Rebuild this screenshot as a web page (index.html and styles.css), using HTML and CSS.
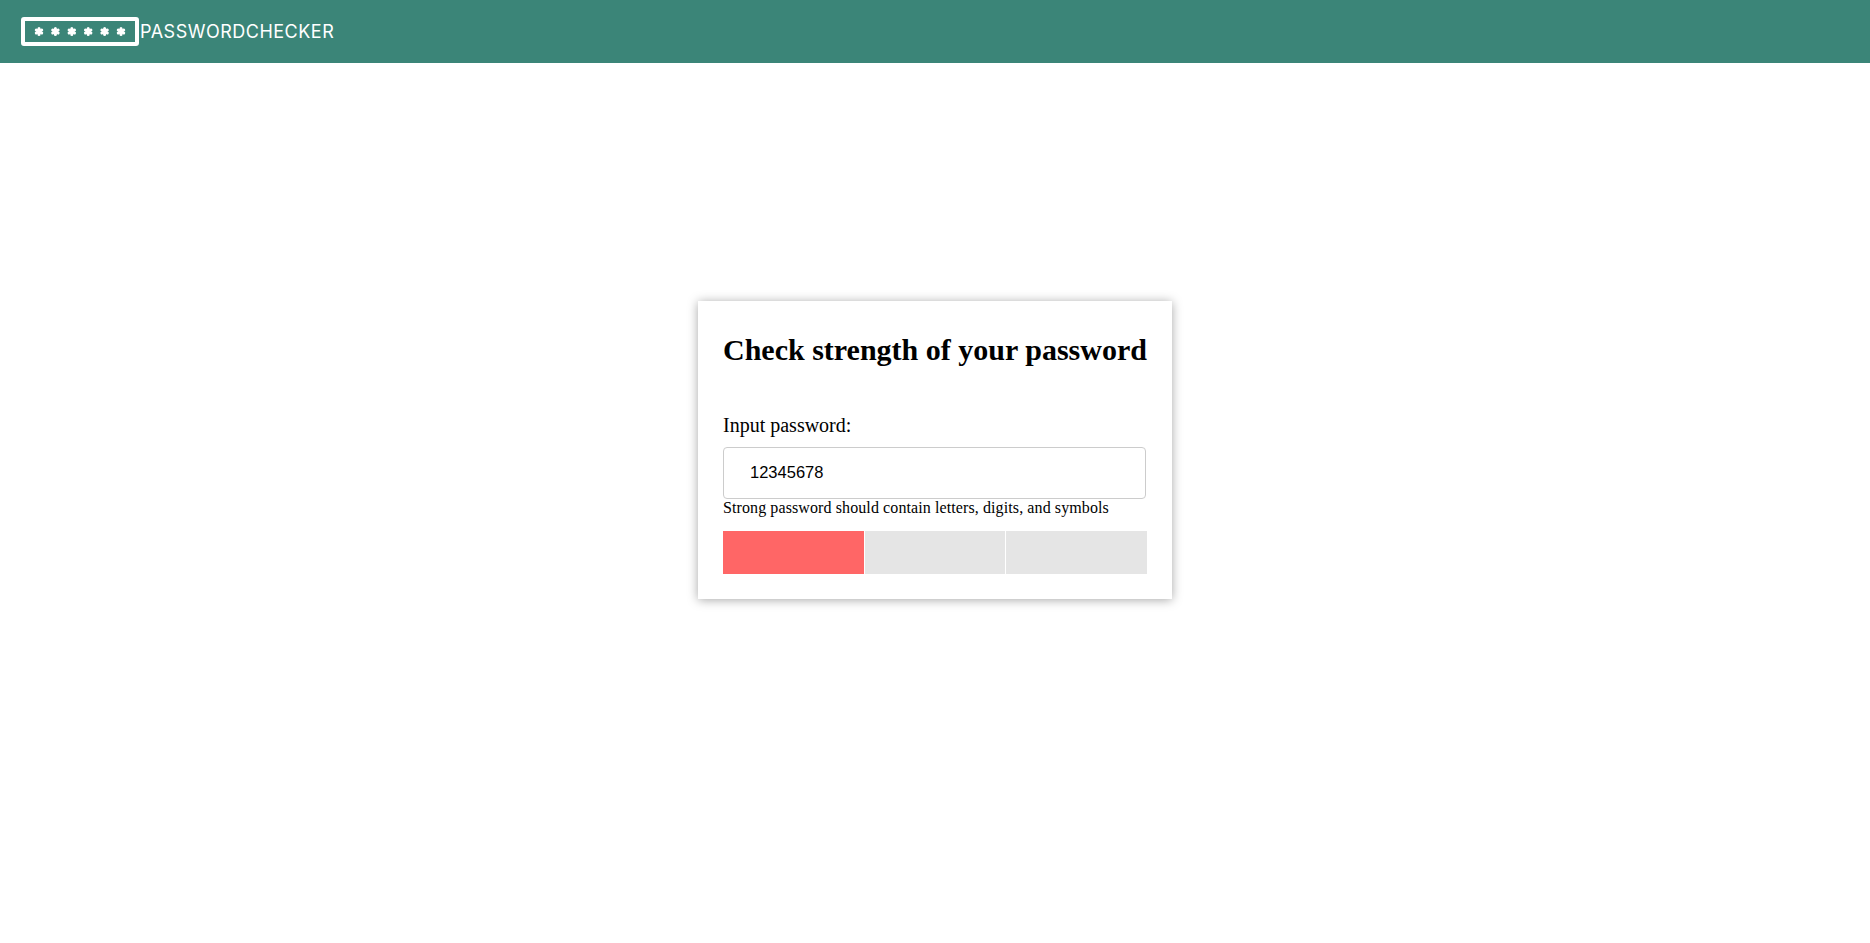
FILE: index.html
```html
<!DOCTYPE html>
<html lang="en">

<head>
    <meta charset="UTF-8">
    <meta name="viewport" content="width=device-width, initial-scale=1.0">
    <title>Password Checker</title>
    <link rel="stylesheet" href="styles.css">
</head>

<body>
    <header class="topbar">
        <a class="logo" href="#">
            <svg class="logo-icon" width="118" height="29" viewBox="0 0 118 29">
                <defs>
                    <g id="star" stroke="#fff" stroke-width="3" stroke-linecap="round">
                        <path d="M0 -3V3" />
                        <path d="M-2.7 -1.5L2.7 1.5" />
                        <path d="M-2.7 1.5L2.7 -1.5" />
                    </g>
                </defs>
                <rect x="2" y="2" width="114" height="25" rx="1" fill="none" stroke="#fff" stroke-width="4" />
                <use href="#star" x="18" y="14.5" />
                <use href="#star" x="34.4" y="14.5" />
                <use href="#star" x="50.8" y="14.5" />
                <use href="#star" x="67.2" y="14.5" />
                <use href="#star" x="83.6" y="14.5" />
                <use href="#star" x="100" y="14.5" />
            </svg>
            <span class="logo-text">PASSWORDCHECKER</span>
        </a>
    </header>

    <main class="card">
        <h1 class="title">Check strength of your password</h1>
        <label class="field-label" for="password">Input password:</label>
        <input class="field-input" id="password" type="text" value="12345678">
        <p class="hint">Strong password should contain letters, digits, and symbols</p>
        <div class="meter">
            <div class="meter-bar meter-bar-weak"></div>
            <div class="meter-bar"></div>
            <div class="meter-bar"></div>
        </div>
    </main>
</body>

</html>
```

FILE: styles.css
```css
* {
    margin: 0;
    padding: 0;
    box-sizing: border-box;
}

html,
body {
    height: 100%;
}

body {
    font-family: "Liberation Serif", serif;
    color: #000;
    background-color: #fff;
}

/* top bar */
.topbar {
    height: 63px;
    padding-left: 21px;
    display: flex;
    align-items: center;
    background-color: #3b8578;
}

.logo {
    display: flex;
    align-items: center;
    gap: 1px;
    color: #fff;
    text-decoration: none;
}

.logo-text {
    font-family: "Inter", sans-serif;
    font-size: 18px;
    font-weight: 400;
    letter-spacing: 0.5px;
}

/* card */
.card {
    width: 474px;
    height: 298px;
    margin: 238px auto 0;
    padding: 32px 25px 0;
    background-color: #fff;
    box-shadow: 0 1px 10px rgba(0, 0, 0, 0.35);
}

.title {
    font-size: 30px;
    line-height: 33px;
    white-space: nowrap;
    margin-bottom: 48px;
}

.field-label {
    display: block;
    font-size: 20px;
    line-height: 23px;
    margin-bottom: 10px;
}

.field-input {
    display: block;
    width: 423px;
    height: 52px;
    padding: 0 26px 2px;
    border: 1px solid #ccc;
    border-radius: 4px;
    outline: none;
    font-family: "Liberation Sans", sans-serif;
    font-size: 16.5px;
    color: #000;
}

.hint {
    font-size: 16px;
    line-height: 18px;
    letter-spacing: 0.1px;
}

.meter {
    display: flex;
    gap: 1px;
    height: 43px;
    margin-top: 14px;
}

.meter-bar {
    flex: 1;
    background-color: #e5e5e5;
}

.meter-bar-weak {
    background-color: #ff6666;
}
```
